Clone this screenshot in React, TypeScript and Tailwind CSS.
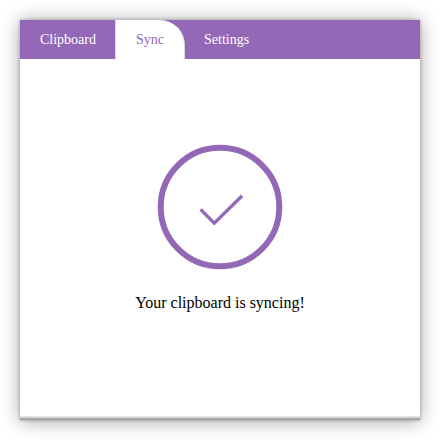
export default function App() {
  return (
    <div className="h-[440px] w-[440px] overflow-hidden bg-white p-5 font-['Liberation_Serif','Times_New_Roman',serif]">
      <div className="flex h-[400px] w-[400px] flex-col bg-white shadow-[0_0_3px_rgba(0,0,0,0.3),0_1px_18px_rgba(0,0,0,0.36)]">
        <nav className="flex h-[39px] shrink-0 bg-[#9368b7] text-sm leading-[39px] text-white">
          <div className="w-[95px] pl-5">Clipboard</div>
          <div className="w-[70px] rounded-tr-[25px] border-x border-r-[#d9d5dd] border-l-[#e4d9ed] bg-white pl-5 text-[#9368b7]">Sync</div>
          <div className="pl-[19px]">Settings</div>
        </nav>
        <main className="flex flex-1 flex-col items-center pt-[85px]">
          <svg width="126" height="126" viewBox="157 144 126 126" fill="none" stroke="#9368b7">
            <circle cx="220" cy="207" r="59.3" strokeWidth="6" />
            <path d="M200.6 209.4L214.3 223.1L242.1 195.7" strokeWidth="3.3" />
          </svg>
          <p className="mt-6 text-base leading-[18px] text-black">Your clipboard is syncing!</p>
        </main>
        <div className="h-px bg-[#e8e8e8]" />
        <div className="h-px bg-[#cccccc]" />
        <div className="h-px bg-[#b8b8b8]" />
        <div className="h-px bg-[#9c9c9c]" />
      </div>
    </div>
  );
}
